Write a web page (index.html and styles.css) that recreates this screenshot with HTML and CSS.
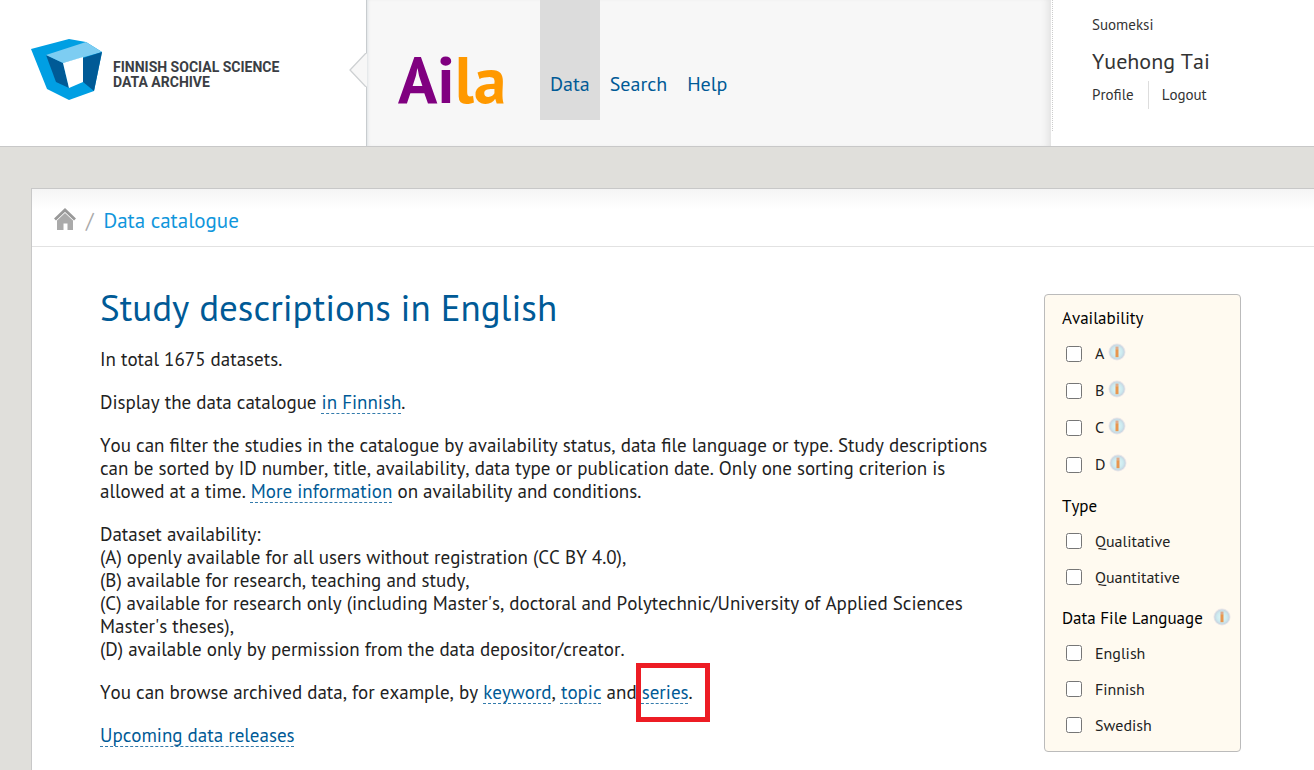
FILE: index.html
```html
<!DOCTYPE html>
<html lang="en">
<head>
<meta charset="utf-8">
<title>Data catalogue - Aila</title>
<link rel="stylesheet" href="styles.css">
</head>
<body>
<svg class="defs" aria-hidden="true">
  <defs>
    <radialGradient id="info-fill"><stop offset="0" stop-color="#e2f7f7"/><stop offset=".65" stop-color="#cdebf0"/><stop offset="1" stop-color="#c6d4e0"/></radialGradient>
    <symbol id="info" viewBox="0 0 18 18">
      <circle cx="9" cy="9" r="8.5" fill="#e9e6e8"/>
      <circle cx="9" cy="9" r="7.6" fill="url(#info-fill)"/>
      <rect x="7.500" y="3.600" width="3" height="2.600" fill="#dfa98a"/>
      <rect x="7.500" y="6.200" width="3" height="8" fill="#e8964f"/>
    </symbol>
  </defs>
</svg>
<header class="header">
  <a class="brand" href="#">
    <svg class="brand-mark" viewBox="0 0 72 62" aria-hidden="true">
      <path d="M0 10 38 0 55 3 71 13 63 52 38 61 16 50Z" fill="#009fe3"/>
      <path d="M15 16 32 24 38 49 25 43Z" fill="#005a96"/>
      <path d="M15 16 55 3 71 13 32 24Z" fill="#7dcdf2"/>
      <path d="M52 19 71 13 63 52 52 43Z" fill="#005a96"/>
      <path d="M32 24 52 18 52 43 38 49Z" fill="#fff"/>
    </svg>
    <span class="brand-name">FINNISH SOCIAL SCIENCE<br>DATA ARCHIVE</span>
  </a>
  <div class="service">
    <svg class="notch" viewBox="0 0 18 34" aria-hidden="true"><path d="M18 0 1 17 18 34Z" fill="#f7f7f7"/><path d="M17 0 1 17 17 34" fill="none" stroke="#cdd0d2" stroke-width="1.3"/></svg>
    <a class="aila" href="#">Ai<span class="aila-end">la</span></a>
    <nav class="nav">
      <a class="nav-link active" href="#">Data</a>
      <a class="nav-link" href="#">Search</a>
      <a class="nav-link" href="#">Help</a>
    </nav>
  </div>
  <div class="user">
    <a href="#">Suomeksi</a>
    <strong class="user-name">Yuehong Tai</strong>
    <div class="user-links"><a class="profile" href="#">Profile</a><a class="logout" href="#">Logout</a></div>
  </div>
</header>
<div class="panel">
  <nav class="crumbs" aria-label="Breadcrumb">
    <a class="home" href="#" aria-label="Home"><svg viewBox="0 0 22 22" width="22" height="22" aria-hidden="true"><path d="M3 12.500 11 5l8 7.500V22h-5.500v-6.500h-4V22H3Z" fill="#aaa"/><path d="M1 11.500 11 2l10 9.500" fill="none" stroke="#999" stroke-width="2.800"/></svg></a>
    <span class="slash">/</span>
    <a class="crumb" href="#">Data catalogue</a>
  </nav>
  <div class="content">
    <main class="main">
      <h1>Study descriptions in English</h1>
      <p>In total 1675 datasets.</p>
      <p>Display the data catalogue <a href="#">in Finnish</a>.</p>
      <p>You can filter the studies in the catalogue by availability status, data file language or type. Study descriptions can be sorted by ID number, title, availability, data type or publication date. Only one sorting criterion is allowed at a time. <a href="#">More information</a> on availability and conditions.</p>
      <p>Dataset availability:<br>(A) openly available for all users without registration (CC BY 4.0),<br>(B) available for research, teaching and study,<br>(C) available for research only (including Master's, doctoral and Polytechnic/University of Applied Sciences Master's theses),<br>(D) available only by permission from the data depositor/creator.</p>
      <p>You can browse archived data, for example, by <a href="#">keyword</a>, <a href="#">topic</a> and <span class="marked"><a href="#">series</a></span>.</p>
      <p><a href="#">Upcoming data releases</a></p>
    </main>
    <form class="filters">
      <fieldset class="coded">
        <legend>Availability</legend>
        <label><input type="checkbox">A <svg class="info"><use href="#info"/></svg></label>
        <label><input type="checkbox">B <svg class="info"><use href="#info"/></svg></label>
        <label><input type="checkbox">C <svg class="info"><use href="#info"/></svg></label>
        <label><input type="checkbox">D <svg class="info"><use href="#info"/></svg></label>
      </fieldset>
      <fieldset>
        <legend>Type</legend>
        <label><input type="checkbox">Qualitative</label>
        <label><input type="checkbox">Quantitative</label>
      </fieldset>
      <fieldset>
        <legend><span class="legend-row">Data File Language <svg class="info"><use href="#info"/></svg></span></legend>
        <label><input type="checkbox">English</label>
        <label><input type="checkbox">Finnish</label>
        <label><input type="checkbox">Swedish</label>
      </fieldset>
    </form>
  </div>
</div>
</body>
</html>
```
FILE: styles.css
```css
* { box-sizing: border-box; }
body {
  margin: 0;
  min-height: 100vh;
  display: flex;
  flex-direction: column;
  background: #e0dfdb;
  color: #222;
  font: 19px/23px "PT Sans", "Noto Sans", sans-serif;
  font-kerning: none;
}
a { color: #005a96; text-decoration: none; }
.defs { position: absolute; width: 0; height: 0; }

.header { display: flex; background: #fff; border-bottom: 1px solid #c8c8c8; }
.brand { flex: 0 0 366px; display: flex; gap: 10px; padding: 39px 0 0 31px; }
.brand-mark { width: 72px; height: 62px; }
.brand-name { padding-top: 21px; color: #3b3e44; font: bold 14px/15px "Roboto", sans-serif; font-kerning: normal; white-space: nowrap; }
.service {
  position: relative;
  flex: 1;
  display: flex;
  gap: 36px;
  height: 146px;
  padding-left: 31px;
  background: #f7f7f7;
  border-left: 1px solid #c8cccf;
  box-shadow: inset 3px 0 3px -2px #dde2e5, inset -8px 0 8px -6px #dcdcdc;
}
.notch { position: absolute; left: -18px; top: 53px; width: 18px; height: 34px; }
.aila { width: 106px; padding-top: 43px; color: #800080; font-size: 65px; line-height: 72px; font-weight: bold; }
.aila-end { color: #f90; }
.nav { display: flex; height: 120px; }
.nav-link { padding: 70px 10px 0; font-size: 20px; line-height: 28px; }
.active { background: #dcdcdc; }
.user { flex: 0 0 262px; height: 131px; margin-left: 1px; padding: 14px 0 0 39px; border-left: 1px dotted #ccc; font-size: 15px; line-height: 21px; }
.user a, .user-name { color: #333; }
.user-name { display: block; margin: 14px 0 8px; font-size: 22px; line-height: 24px; font-weight: normal; }
.user-links { display: flex; line-height: 28px; }
.profile { padding-right: 14px; border-right: 1px solid #ddd; }
.logout { padding-left: 13px; }

.panel { flex: 1; margin: 41px 0 0 31px; background: #fff; border: solid #c8c8c8; border-width: 1px 0 0 1px; }
.crumbs {
  display: flex;
  align-items: center;
  gap: 10px;
  height: 58px;
  padding: 6px 22px 0;
  border-bottom: 1px solid #e2e2e2;
  background: linear-gradient(#f5f5f5, #fff 20px);
  font-size: 21px;
}
.home { display: flex; padding-bottom: 3px; }
.slash { color: #aaa; }
.crumb { color: #0f96dc; }
.content { display: flex; align-items: flex-start; gap: 44px; padding: 37px 73px 18px 68px; }
.main { flex: 1; }
h1 { margin: 0 0 17px; color: #005a96; font-size: 37px; line-height: 47px; font-weight: normal; }
p { margin: 0 0 20px; }
p a { text-decoration: underline dashed #337bac 1px; text-underline-offset: 4px; text-decoration-skip-ink: none; }
.marked { position: relative; }
.marked::after { content: ""; position: absolute; inset: -17px -21px -18px -6px; border: 5px solid #ed1c24; }

.filters {
  flex: 0 0 197px;
  margin-top: 10px;
  padding: 8px 9px 8px 17px;
  background: #fffaf0;
  border: 1px solid #bbb;
  border-radius: 4px;
  color: #222;
  font-size: 16px;
}
fieldset { margin: 0; padding: 0; border: 0; min-width: 0; }
fieldset + fieldset { margin-top: 8px; }
legend { width: 100%; margin-bottom: 2px; padding: 0; color: #000; font-size: 17px; line-height: 30px; }
.legend-row { display: flex; align-items: center; justify-content: space-between; white-space: nowrap; }
label { display: flex; align-items: center; height: 36px; }
.coded label { height: 37px; }
input { width: 16px; height: 16px; margin: 0 13px 0 4px; }
.info { width: 18px; height: 18px; margin-bottom: 3px; }
label .info { margin-left: 4px; }
```
